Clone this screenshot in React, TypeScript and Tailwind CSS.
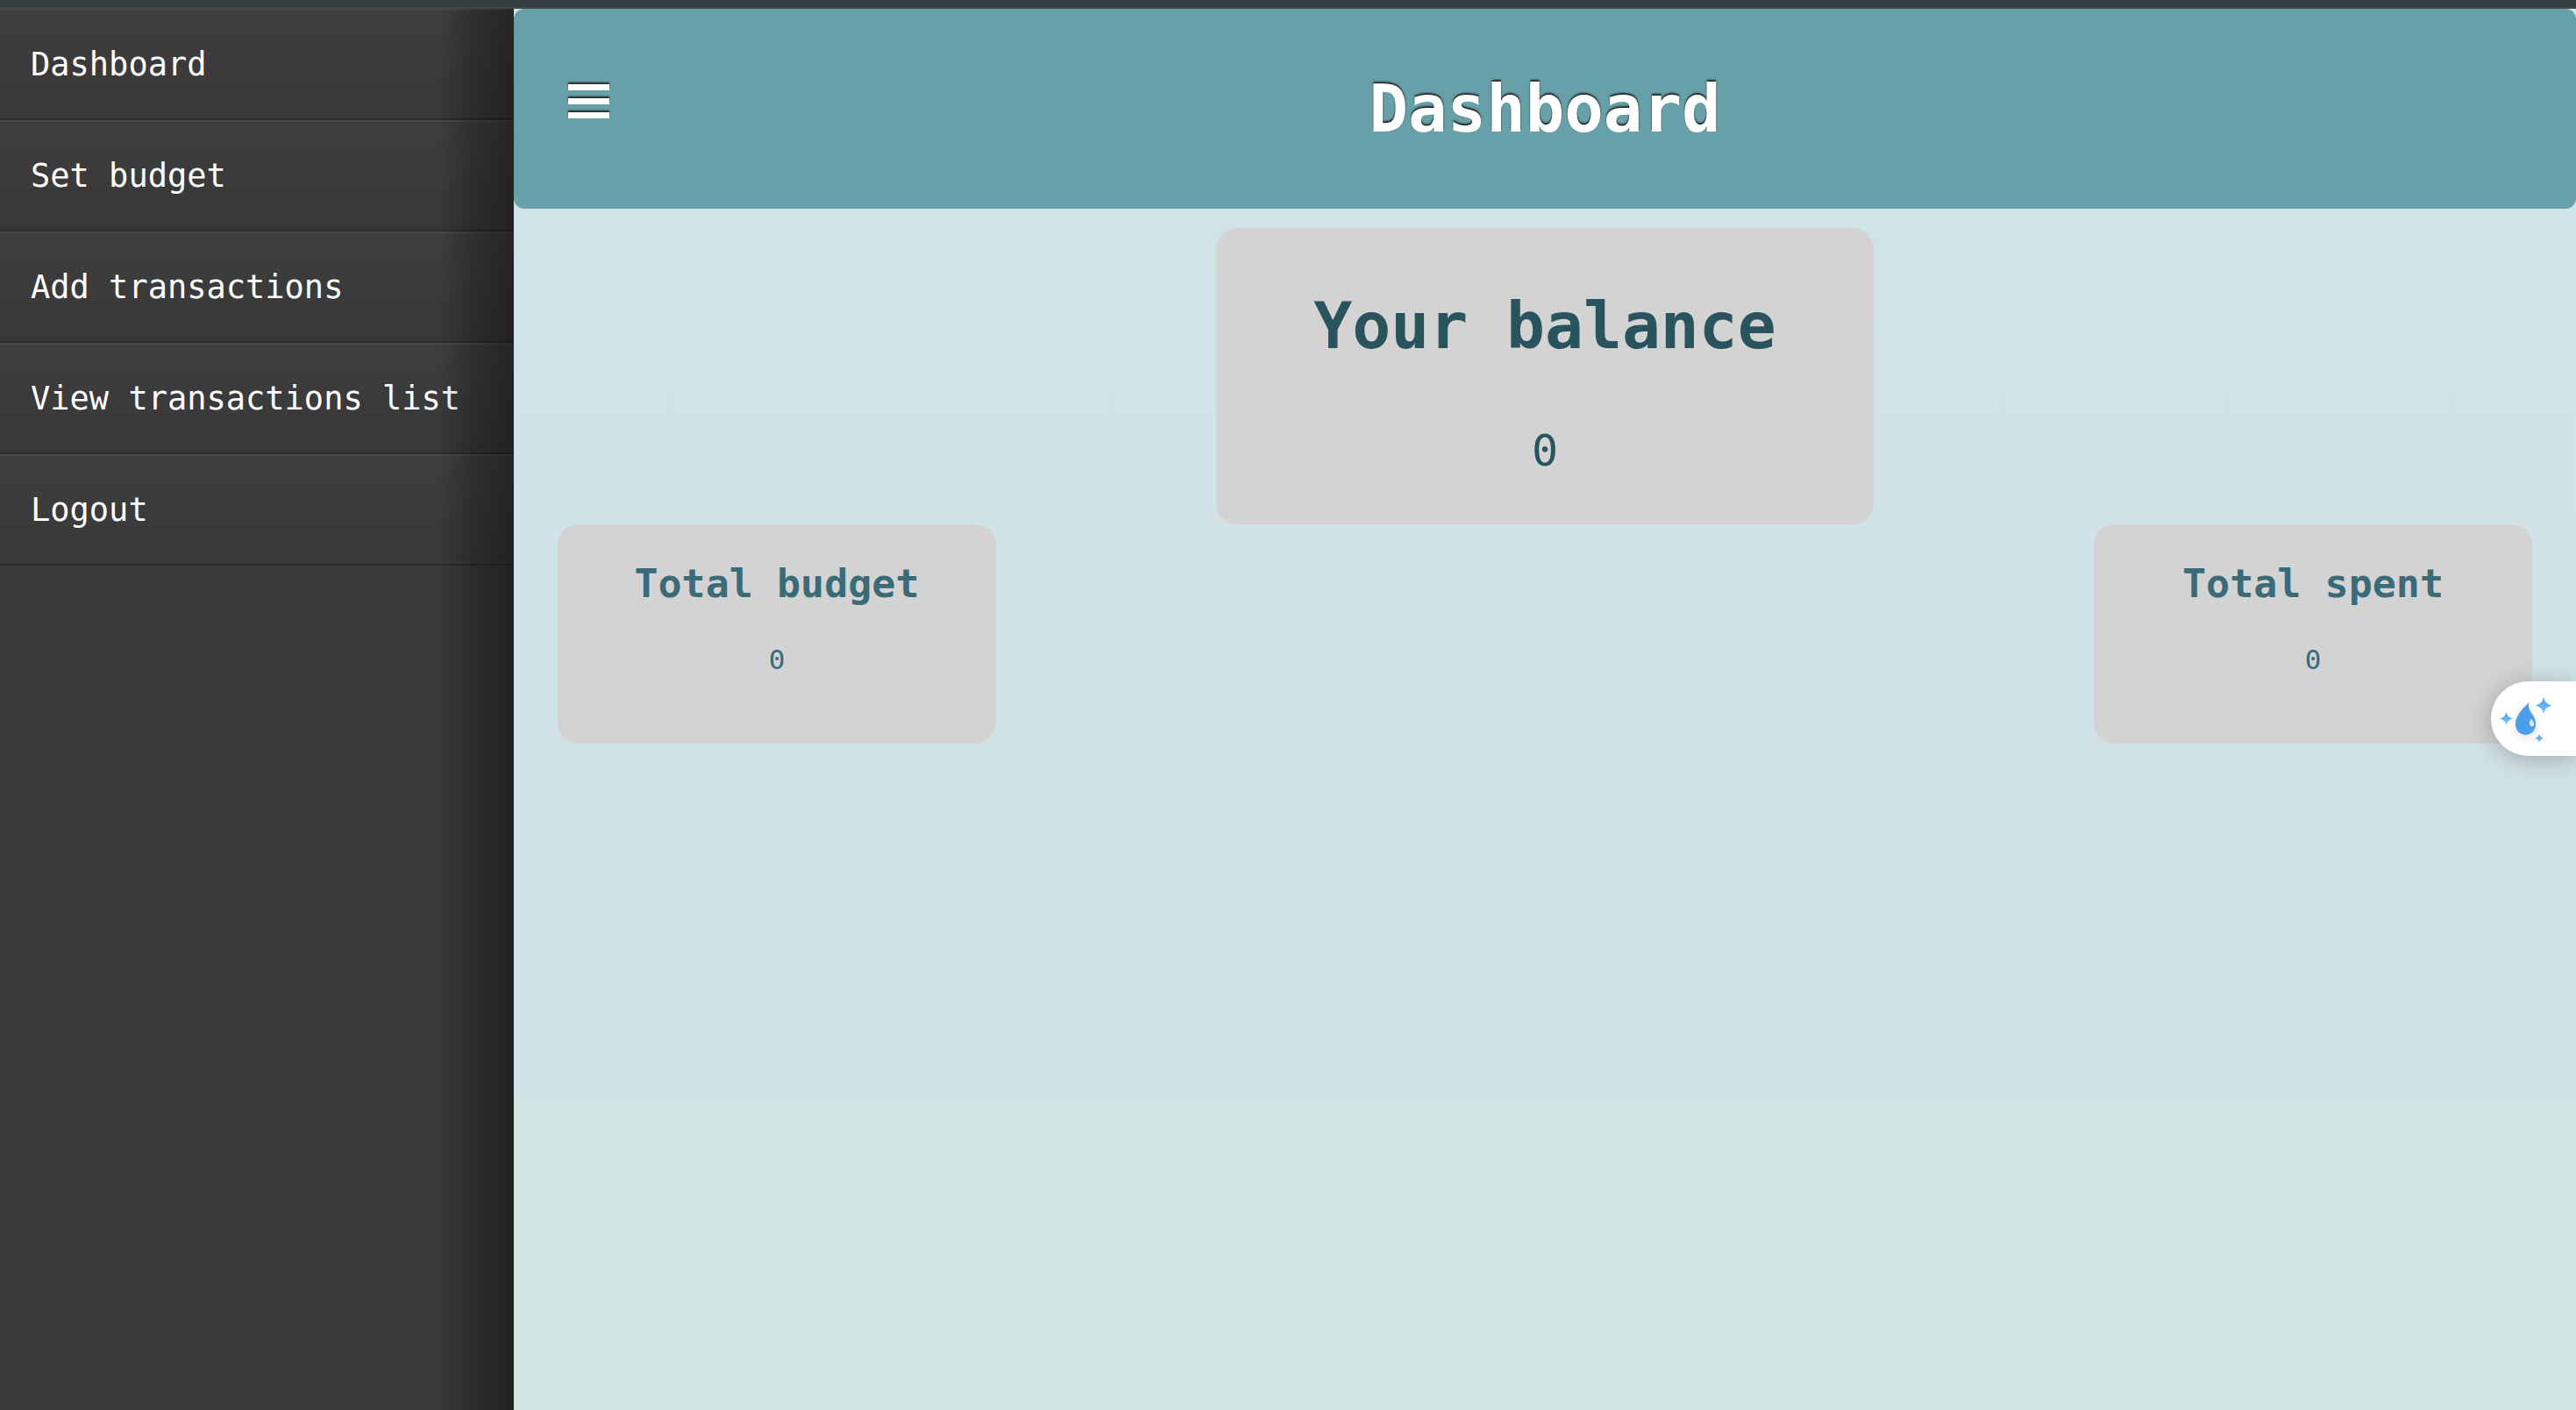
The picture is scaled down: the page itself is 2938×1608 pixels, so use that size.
const navItems = [
  'Dashboard',
  'Set budget',
  'Add transactions',
  'View transactions list',
  'Logout',
];

function Sidebar() {
  return (
    <aside className="relative w-[586px] shrink-0 bg-[#3a3a3a]">
      <nav aria-label="Main menu">
        <ul>
          {navItems.map((label) => (
            <li key={label}>
              <a
                href="#"
                className="block border-y-2 border-t-[#484848] border-b-[#2c2c2c] bg-linear-to-b from-[#3e3e3e] to-[#383838] px-[35px] text-[37px] leading-[123px] whitespace-nowrap text-white"
              >
                {label}
              </a>
            </li>
          ))}
        </ul>
      </nav>
      <div className="pointer-events-none absolute inset-y-0 right-0 w-[86px] bg-linear-to-r from-black/0 via-black/25 to-black/40" />
    </aside>
  );
}

function Header() {
  return (
    <header className="grid h-[228px] grid-cols-[1fr_auto_1fr] items-center rounded-xl bg-[#67a0a8] px-[62px]">
      <button
        type="button"
        aria-label="Toggle menu"
        className="mb-[18px] flex w-[47px] flex-col gap-[9px] justify-self-start"
      >
        <span className="h-[7px] w-full bg-white shadow-[0_-2px_2px_#222]" />
        <span className="h-[7px] w-full bg-white shadow-[0_-2px_2px_#222]" />
        <span className="h-[7px] w-full bg-white shadow-[0_-2px_2px_#222]" />
      </button>
      <h1 className="text-[74px] leading-[80px] font-bold text-white [text-shadow:0_-2px_2px_#222]">
        Dashboard
      </h1>
    </header>
  );
}

function SummaryCard({ title, value }: { title: string; value: number }) {
  return (
    <section className="w-[500px] rounded-3xl bg-[#d3d3d3] pt-11 pb-[76px] text-center text-[#3a6b78]">
      <h3 className="mb-[42px] text-[45px] leading-[48px] font-bold">{title}</h3>
      <p className="text-[31px] leading-[40px]">{value}</p>
    </section>
  );
}

function AssistantButton() {
  return (
    <button
      type="button"
      aria-label="Open assistant"
      className="fixed top-[777px] right-0 h-[85px] w-[97px] rounded-l-full bg-white shadow-[0_4px_28px_rgba(0,0,0,0.25)]"
    >
      <svg viewBox="0 0 97 85" className="h-full w-full" aria-hidden="true">
        <defs>
          <linearGradient id="sparkle" x1="0" y1="0" x2="0" y2="1">
            <stop offset="0" stopColor="#4b9bea" />
            <stop offset="1" stopColor="#7cc6fa" />
          </linearGradient>
        </defs>
        <path
          className="drop-shadow-[0_2px_5px_rgba(0,0,0,0.15)]"
          d="M43.300 24C36 31 28 39.500 28 49C28 56 33 61 39.500 61C46 61 51 56 51 49C51 45 49.800 41.500 47.500 38C44.500 33.500 42 30 43.300 24Z"
          fill="#4d9eeb"
        />
        <path
          d="M46 42.500C44.500 45 44 46.500 44 48.500C44 50.500 45 51.500 46.600 51.500C48.300 51.500 49.200 50.300 49.200 48.500C49.200 46 47.200 45 46 42.500Z"
          fill="#dfe5ea"
        />
        <path d="M60 18Q61.500 26 69.500 27.500Q61.500 29 60 37Q58.500 29 50.500 27.500Q58.500 26 60 18Z" fill="url(#sparkle)" />
        <path d="M17.500 35Q18.700 41.300 25 42.500Q18.700 43.700 17.500 50Q16.300 43.700 10 42.500Q16.300 41.300 17.500 35Z" fill="url(#sparkle)" />
        <path d="M55 60Q55.900 64.100 60 65Q55.900 65.900 55 70Q54.100 65.900 50 65Q54.100 64.100 55 60Z" fill="url(#sparkle)" />
      </svg>
    </button>
  );
}

export default function App() {
  return (
    <div className="flex min-h-screen flex-col font-['DejaVu_Sans_Mono',monospace]">
      <div className="h-[10px] shrink-0 border-b-2 border-[#464646] bg-[#363d3f]" />
      <div className="flex flex-1">
        <Sidebar />
        <div className="min-w-0 flex-1 bg-[linear-gradient(#d0e3e5,#d1e2e7_78%,#d1e3e2_78%)]">
          <Header />
          <main className="px-[50px] pt-[22px]">
            <section className="mx-auto w-[750px] rounded-3xl bg-[#d3d3d3] pt-[72px] pb-[54px] text-center text-[#29535d]">
              <h2 className="mb-[72px] text-[73px] leading-[80px] font-bold">Your balance</h2>
              <p className="text-[50px] leading-[60px]">0</p>
            </section>
            <div className="flex justify-between">
              <SummaryCard title="Total budget" value={0} />
              <SummaryCard title="Total spent" value={0} />
            </div>
          </main>
        </div>
      </div>
      <AssistantButton />
    </div>
  );
}
